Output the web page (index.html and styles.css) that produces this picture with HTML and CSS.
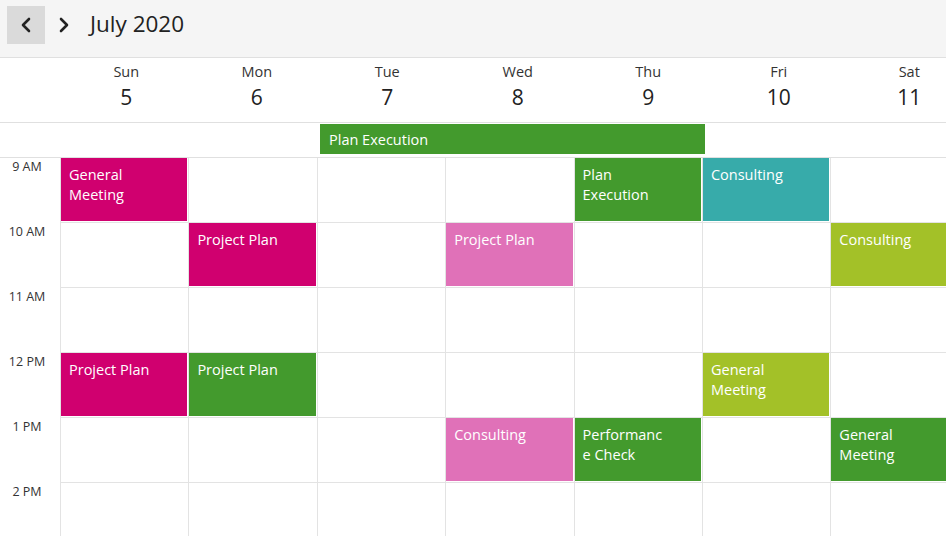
FILE: index.html
```html
<!DOCTYPE html>
<html>
<head>
<meta charset="utf-8">
<link rel="stylesheet" href="styles.css">
</head>
<body>
<div class="page">
  <div class="toolbar">
    <button class="nav-btn active" aria-label="Previous">
      <svg width="12" height="16" viewBox="0 0 12 16"><path d="M9 2 L3 8 L9 14" fill="none" stroke="#222" stroke-width="2.6" stroke-linecap="round" stroke-linejoin="round"/></svg>
    </button>
    <button class="nav-btn" aria-label="Next">
      <svg width="12" height="16" viewBox="0 0 12 16"><path d="M3 2 L9 8 L3 14" fill="none" stroke="#222" stroke-width="2.6" stroke-linecap="round" stroke-linejoin="round"/></svg>
    </button>
    <div class="title">July 2020</div>
  </div>

  <div class="day-header">
    <div></div>
    <div class="day"><div class="dname">Sun</div><div class="dnum">5</div></div>
    <div class="day"><div class="dname">Mon</div><div class="dnum">6</div></div>
    <div class="day"><div class="dname">Tue</div><div class="dnum">7</div></div>
    <div class="day"><div class="dname">Wed</div><div class="dnum">8</div></div>
    <div class="day"><div class="dname">Thu</div><div class="dnum">9</div></div>
    <div class="day"><div class="dname">Fri</div><div class="dnum">10</div></div>
    <div class="day"><div class="dname">Sat</div><div class="dnum">11</div></div>
  </div>

  <div class="allday">
    <div class="allday-event green">Plan Execution</div>
  </div>

  <div class="grid">
    <div class="time">9 AM</div>
    <div class="cell"><div class="ev magenta">General<br>Meeting</div></div>
    <div class="cell"></div>
    <div class="cell"></div>
    <div class="cell"></div>
    <div class="cell"><div class="ev green">Plan<br>Execution</div></div>
    <div class="cell"><div class="ev teal">Consulting</div></div>
    <div class="cell"></div>

    <div class="time">10 AM</div>
    <div class="cell"></div>
    <div class="cell"><div class="ev magenta">Project Plan</div></div>
    <div class="cell"></div>
    <div class="cell"><div class="ev pink">Project Plan</div></div>
    <div class="cell"></div>
    <div class="cell"></div>
    <div class="cell"><div class="ev lime">Consulting</div></div>

    <div class="time">11 AM</div>
    <div class="cell"></div>
    <div class="cell"></div>
    <div class="cell"></div>
    <div class="cell"></div>
    <div class="cell"></div>
    <div class="cell"></div>
    <div class="cell"></div>

    <div class="time">12 PM</div>
    <div class="cell"><div class="ev magenta">Project Plan</div></div>
    <div class="cell"><div class="ev green">Project Plan</div></div>
    <div class="cell"></div>
    <div class="cell"></div>
    <div class="cell"></div>
    <div class="cell"><div class="ev lime">General<br>Meeting</div></div>
    <div class="cell"></div>

    <div class="time">1 PM</div>
    <div class="cell"></div>
    <div class="cell"></div>
    <div class="cell"></div>
    <div class="cell"><div class="ev pink">Consulting</div></div>
    <div class="cell"><div class="ev green">Performanc<br>e Check</div></div>
    <div class="cell"></div>
    <div class="cell"><div class="ev green">General<br>Meeting</div></div>

    <div class="time">2 PM</div>
    <div class="cell"></div>
    <div class="cell"></div>
    <div class="cell"></div>
    <div class="cell"></div>
    <div class="cell"></div>
    <div class="cell"></div>
    <div class="cell"></div>
  </div>
</div>
</body>
</html>
```

FILE: styles.css
```css
html, body {
  margin: 0;
  padding: 0;
  background: #fff;
}
body {
  width: 946px;
  height: 536px;
  overflow: hidden;
  font-family: "Open Sans", "Noto Sans", sans-serif;
  color: #333;
}
.page {
  width: 980px;
}
.toolbar {
  height: 57px;
  background: #f5f5f5;
  border-bottom: 1px solid #e0e0e0;
  display: flex;
  align-items: center;
  padding-left: 7px;
  box-sizing: content-box;
  width: 939px;
}
.nav-btn {
  width: 38px;
  height: 38px;
  border: none;
  background: transparent;
  padding: 0;
  margin: 0;
  display: flex;
  align-items: center;
  justify-content: center;
  margin-top: -7px;
}
.nav-btn.active {
  background: #dadada;
}
.title {
  margin-left: 7px;
  margin-top: -10px;
  font-size: 22.5px;
  color: #222;
}
.day-header {
  display: grid;
  grid-template-columns: 61px repeat(7, 130.5px);
  height: 64px;
  border-bottom: 1px solid #e0e0e0;
}
.day {
  text-align: center;
  padding-top: 4px;
}
.dname {
  font-size: 14.5px;
  line-height: 20px;
  color: #333;
}
.dnum {
  font-size: 21px;
  line-height: 30px;
  color: #222;
}
.allday {
  height: 35px;
  border-bottom: 1px solid #e0e0e0;
  padding-left: 320px;
  padding-top: 1px;
  box-sizing: border-box;
}
.allday-event {
  width: 385px;
  height: 30px;
  line-height: 31px;
  padding-left: 9px;
  box-sizing: border-box;
  color: #fff;
  font-size: 14.5px;
}
.grid {
  display: grid;
  grid-template-columns: 60px repeat(7, 128.4px);
  grid-auto-rows: 65px;
}
.time {
  font-size: 12.5px;
  color: #333;
  text-align: center;
  padding-right: 6px;
  line-height: 16px;
  padding-top: 1px;
}
.cell {
  border-left: 1px solid #e3e3e3;
  border-bottom: 1px solid #e3e3e3;
  padding: 0 1px 1px 0;
  box-sizing: border-box;
  display: flex;
}
.ev {
  flex: 1;
  color: #fff;
  font-size: 14.5px;
  line-height: 19.5px;
  padding: 7px 8px;
  box-sizing: border-box;
}
.magenta { background: #d0006f; }
.green { background: #439a2d; }
.teal { background: #37abaa; }
.lime { background: #a3c128; }
.pink { background: #e071b8; }
```
